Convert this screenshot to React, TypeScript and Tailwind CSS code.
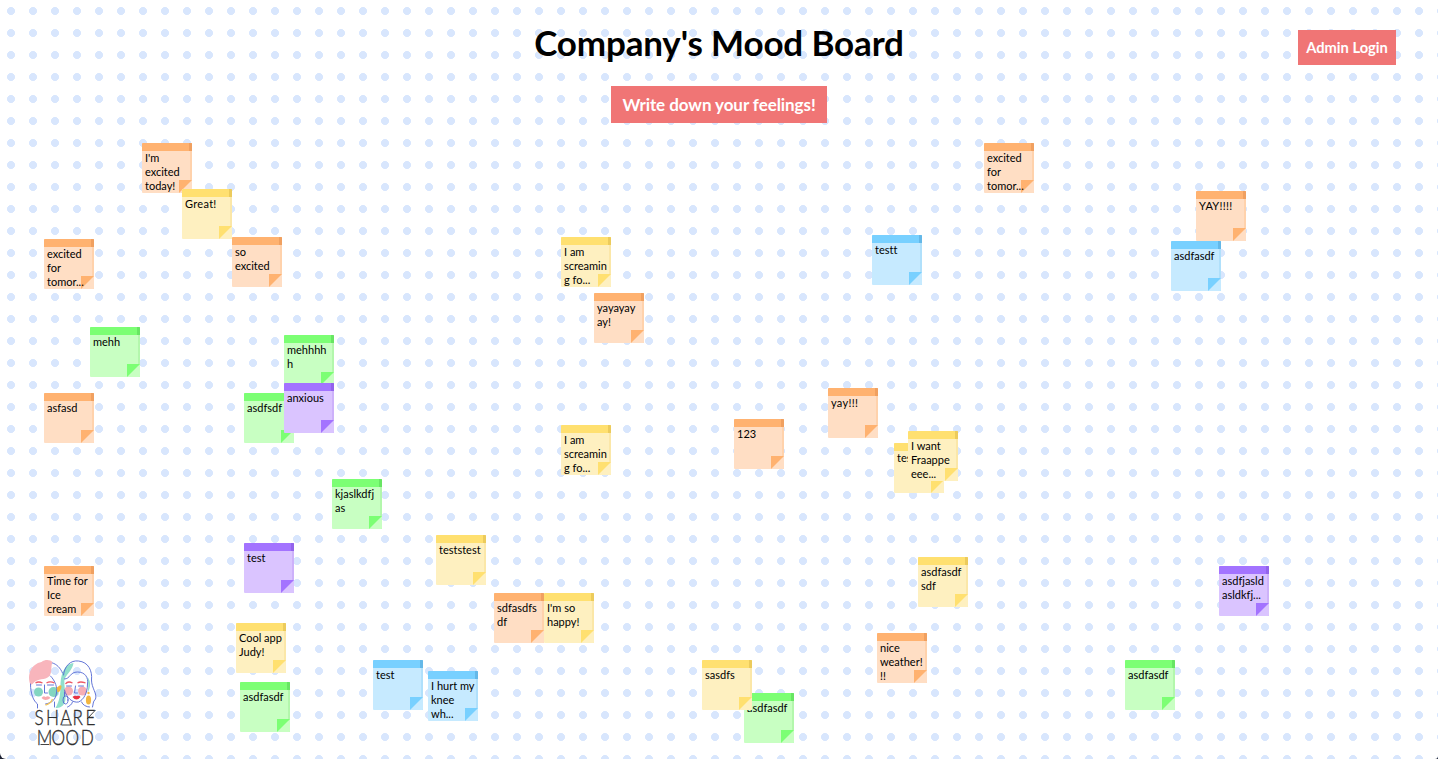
type Tone = 'orange' | 'yellow' | 'green' | 'blue' | 'purple';

const tones: Record<Tone, { paper: string; bar: string; barEdge: string; edge: string; fold: string; flap: string }> = {
  orange: { paper: 'bg-[#ffdec4]', bar: 'bg-[#ffb270]', barEdge: 'bg-[#f0a060]', edge: 'bg-[#ffd2ac]', fold: 'fill-[#ffb270]', flap: 'fill-[#ffdec4]' },
  yellow: { paper: 'bg-[#fef0c0]', bar: 'bg-[#ffe070]', barEdge: 'bg-[#eccb5c]', edge: 'bg-[#fbe7a8]', fold: 'fill-[#ffe070]', flap: 'fill-[#fef0c0]' },
  green: { paper: 'bg-[#c8ffc2]', bar: 'bg-[#7cff74]', barEdge: 'bg-[#68e563]', edge: 'bg-[#b3f7ac]', fold: 'fill-[#7cff74]', flap: 'fill-[#c8ffc2]' },
  blue: { paper: 'bg-[#c6eaff]', bar: 'bg-[#78d0ff]', barEdge: 'bg-[#64b8e8]', edge: 'bg-[#b0e0fb]', fold: 'fill-[#78d0ff]', flap: 'fill-[#c6eaff]' },
  purple: { paper: 'bg-[#dac4ff]', bar: 'bg-[#a373ff]', barEdge: 'bg-[#9263eb]', edge: 'bg-[#cdb1fa]', fold: 'fill-[#a373ff]', flap: 'fill-[#dac4ff]' },
};

const notes: [number, number, Tone, string][] = [
  [142, 143, 'orange', "I'm excited today!"],
  [182, 189, 'yellow', 'Great!'],
  [232, 237, 'orange', 'so excited'],
  [44, 239, 'orange', 'excited for tomor...'],
  [561, 237, 'yellow', 'I am screaming fo...'],
  [594, 293, 'orange', 'yayayay\u200bay!'],
  [984, 143, 'orange', 'excited for tomor...'],
  [1196, 191, 'orange', 'YAY!!!!'],
  [1171, 241, 'blue', 'asdfasdf'],
  [872, 235, 'blue', 'testt'],
  [90, 327, 'green', 'mehh'],
  [284, 335, 'green', 'mehhhhh'],
  [44, 393, 'orange', 'asfasd'],
  [244, 393, 'green', 'asdfsdf'],
  [284, 383, 'purple', 'anxious'],
  [561, 425, 'yellow', 'I am screaming fo...'],
  [734, 419, 'orange', '123'],
  [828, 388, 'orange', 'yay!!!'],
  [894, 443, 'yellow', 'test'],
  [908, 431, 'yellow', 'I want Fraappeeee...'],
  [332, 479, 'green', 'kjaslkdfjas'],
  [244, 543, 'purple', 'test'],
  [436, 535, 'yellow', 'teststest'],
  [44, 566, 'orange', 'Time for Ice cream'],
  [494, 593, 'orange', 'sdfasdfsdf'],
  [544, 593, 'yellow', "I'm so happy!"],
  [918, 557, 'yellow', 'asdfasdfsdf'],
  [1219, 566, 'purple', 'asdfjasldasldkfj...'],
  [236, 623, 'yellow', 'Cool app Judy!'],
  [240, 682, 'green', 'asdfasdf'],
  [373, 660, 'blue', 'test'],
  [428, 671, 'blue', 'I hurt my knee wh...'],
  [877, 633, 'orange', 'nice weather!!!'],
  [744, 693, 'green', 'asdfasdf'],
  [702, 660, 'yellow', 'sasdfs'],
  [1125, 660, 'green', 'asdfasdf'],
];

function Note({ x, y, tone, text }: { x: number; y: number; tone: Tone; text: string }) {
  const t = tones[tone];
  const tracking = /^\w+!+$/.test(text) && text.length < 8 ? 'tracking-[0.3px]' : 'tracking-normal';
  return (
    <article
      className={`absolute h-[50px] w-[50px] overflow-hidden rounded-[1px] ${t.paper}`}
      style={{ left: x, top: y }}
    >
      <div className={`h-2 ${t.bar}`} />
      <div className={`absolute top-0 right-0 h-2 w-[3px] ${t.barEdge}`} />
      <div className={`absolute top-2 right-0 h-[42px] w-[2px] ${t.edge}`} />
      <svg className="absolute right-0 bottom-0 h-[13px] w-[13px]" viewBox="0 0 13 13">
        <path className={t.flap} d="M13 0V13H0Z" />
        <path className={t.fold} d="M0 0H13L0 13Z" />
      </svg>
      <p className={`relative w-[47px] pl-[3px] text-[11px] leading-[14px] break-words text-black ${tracking}`}>{text}</p>
    </article>
  );
}

function Logo() {
  return (
    <svg className="h-[92px] w-[72px] overflow-visible" viewBox="0 0 72 92" fill="none">
      <g transform="translate(0.5 3)">
        <path d="M3 26C-1 15 4 5 14 3C18 0 23 1 25 3C23 8 25 12 22 17C17 22 11 18 5 25Z" fill="#f8b5bc" />
        <path d="M33 24C34 12 38 5 46 4C45 11 40 14 37 20C36 28 40 38 37 44C35 48 32 49 28 49C32 42 33 36 33 24Z" fill="#91dfcc" />
        <path d="M60 18C64 23 63 29 60 34C61 28 61 24 60 18Z" fill="#91dfcc" />
        <g fill="#82d5c1">
          <circle cx="11" cy="33" r="4.500" />
          <circle cx="26" cy="33" r="5" />
        </g>
        <g fill="#f7aeb4">
          <circle cx="41" cy="32" r="4.500" />
          <circle cx="55" cy="32" r="4.500" />
        </g>
        <g stroke="#5267d2" strokeWidth=".9" strokeLinecap="round">
          <path d="M3 25C3 35 6 42 10 45V49M23 17C28 22 30 29 29 34C28 42 23 44 18 45M27 43V48M25 4C29 5 33 9 35 14" />
          <path d="M36 16C37 7 43 1 51 2C61 3 65 12 64 21C64 29 70 35 68 40C65 43 66 45 65 48M37 20C43 20 42 13 50 13C58 13 61 19 60 25C60 34 56 41 51 43C45 44 39 39 37 31M45 43C44 46 42 47 40 48M54 43C55 46 59 48 62 48" />
          <path d="M9 26H14M20 26H26M17 26V34H20M39 27H44M51 27H56M48 27L47 34H50" />
          <ellipse cx="38" cy="41" rx="2.500" ry="4" />
          <path d="M37 33V37" />
        </g>
        <path d="M8 24C11 22 13 23 15 24M19 24C22 22 25 23 27 24M38 25C40 22 43 23 45 24M50 24C53 22 55 23 58 24" stroke="#ee5b68" strokeWidth="1.300" />
        <path d="M14 39Q16 36 18 38Q21 36 23 39Q18 43 14 39Z" fill="#f7aaae" />
        <path d="M45 38Q47 36 49 37Q52 36 53 38Q49 43 45 38Z" fill="#e83243" />
        <path d="M29 29C31 27 33 25 34 27C34 30 32 34 30 33Z" fill="#f3b642" />
        <path d="M18 46C22 45 24 43 25 40" stroke="#f3c65c" strokeWidth="1.300" />
        <g fill="#f3b642">
          <circle cx="61" cy="34" r="1.200" />
          <ellipse cx="61" cy="41" rx="2.600" ry="4.500" />
        </g>
      </g>
      <g transform="scale(0.78 1)" className="fill-[#303030] font-['Lato'] text-[22px] font-light" stroke="#303030" strokeWidth=".35">
        <text x="9.500 24.500 42.500 58.500 75" y="69.500">SHARE</text>
        <text x="12.500 31.500 49.500 69" y="89">MOOD</text>
      </g>
      <path d="M34.500 69H45M13.500 88.500H22M68.500 54L60 63" stroke="#303030" strokeWidth=".9" />
    </svg>
  );
}

export default function App() {
  return (
    <div className="h-[759px] w-[1438px] overflow-hidden bg-[#1c2233]">
      <main className="relative flex h-full w-full flex-col items-center overflow-hidden rounded-br-[3px] rounded-bl-[6px] bg-white bg-[radial-gradient(circle_at_center,#d8e6fd_3.700px,transparent_4.300px)] bg-[length:22px_22px] font-['Lato',sans-serif] [font-variant-ligatures:none]">
        <header className="grid w-full grid-cols-3 items-start pt-[21px]">
          <h1 className="col-start-2 text-center text-[35px] leading-[43px] font-bold tracking-[-0.15px] whitespace-nowrap text-black">Company's Mood Board</h1>
          <button className="mt-[9px] mr-[42px] h-[35px] w-[98px] justify-self-end bg-[#f07575] text-[14.700px] font-bold whitespace-nowrap text-white">Admin Login</button>
        </header>
        <button className="mt-[21px] h-[37px] w-[216px] bg-[#f07575] text-[17px] font-bold tracking-[-0.07px] whitespace-nowrap text-white">Write down your feelings!</button>
        {notes.map(([x, y, tone, text], i) => (
          <Note key={i} x={x} y={y} tone={tone} text={text} />
        ))}
        <footer className="mt-auto mb-[11px] ml-[27px] self-start">
          <Logo />
        </footer>
      </main>
    </div>
  );
}
